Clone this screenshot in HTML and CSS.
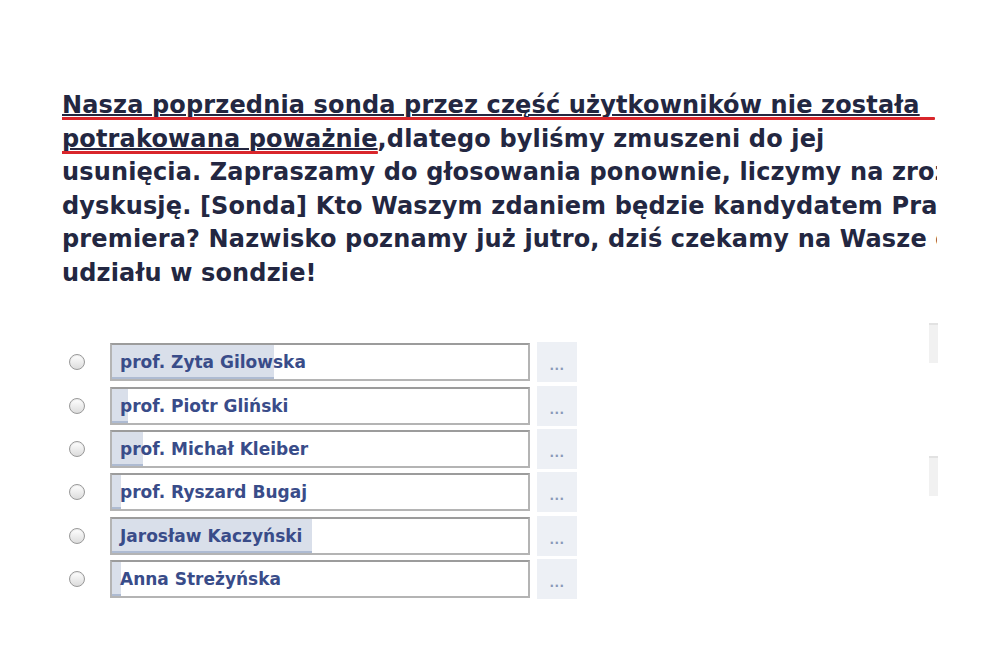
FILE: index.html
```html
<!DOCTYPE html>
<html lang="pl">
<head>
<meta charset="utf-8">
<title>Sonda</title>
<link rel="stylesheet" href="styles.css">
</head>
<body>
<div class="page">
  <div class="post">
    <div class="line"><span class="ul">Nasza poprzednia sonda przez część użytkowników nie została</span></div>
    <div class="line"><span class="ul">potrakowana poważnie</span>,dlatego byliśmy zmuszeni do jej</div>
    <div class="line">usunięcia. Zapraszamy do głosowania ponownie, liczymy na zrozumienie i merytoryczną</div>
    <div class="line">dyskusję. [Sonda] Kto Waszym zdaniem będzie kandydatem Prawa i Sprawiedliwości na</div>
    <div class="line">premiera? Nazwisko poznamy już jutro, dziś czekamy na Wasze opinie. Zapraszamy do</div>
    <div class="line">udziału w sondzie!</div>
    <div class="mark mark1"></div>
    <div class="mark mark2"></div>
  </div>

  <div class="poll-area">
    <div class="poll">
      <div class="row">
        <span class="radio"></span>
        <div class="box"><div class="bar" style="width:162px"></div><span class="name">prof. Zyta Gilowska</span></div>
        <div class="more"><span class="dots">...</span></div>
      </div>
      <div class="row">
        <span class="radio"></span>
        <div class="box"><div class="bar" style="width:16px"></div><span class="name">prof. Piotr Gliński</span></div>
        <div class="more"><span class="dots">...</span></div>
      </div>
      <div class="row">
        <span class="radio"></span>
        <div class="box"><div class="bar" style="width:31px"></div><span class="name">prof. Michał Kleiber</span></div>
        <div class="more"><span class="dots">...</span></div>
      </div>
      <div class="row">
        <span class="radio"></span>
        <div class="box"><div class="bar" style="width:9px"></div><span class="name">prof. Ryszard Bugaj</span></div>
        <div class="more"><span class="dots">...</span></div>
      </div>
      <div class="row">
        <span class="radio"></span>
        <div class="box"><div class="bar" style="width:200px"></div><span class="name">Jarosław Kaczyński</span></div>
        <div class="more"><span class="dots">...</span></div>
      </div>
      <div class="row">
        <span class="radio"></span>
        <div class="box"><div class="bar" style="width:9px"></div><span class="name">Anna Streżyńska</span></div>
        <div class="more"><span class="dots">...</span></div>
      </div>
    </div>
    <div class="side">
      <div class="ghost ghost1"></div>
      <div class="ghost ghost2"></div>
    </div>
  </div>
</div>
</body>
</html>
```

FILE: styles.css
```css
html, body {
  margin: 0;
  padding: 0;
  background: #ffffff;
}

.page {
  width: 1000px;
  height: 667px;
  overflow: hidden;
  padding: 89px 0 0 62px;
  box-sizing: border-box;
}

.post {
  position: relative;
  width: 875px;
  overflow: hidden;
  font-family: "DejaVu Sans", "Liberation Sans", sans-serif;
  font-weight: bold;
  font-size: 24px;
  letter-spacing: 0.15px;
  line-height: 33.5px;
  color: #232741;
}

.line {
  white-space: nowrap;
}

.ul {
  text-decoration: underline;
  text-decoration-thickness: 2px;
  text-underline-offset: 1px;
}

.mark {
  position: absolute;
  height: 3px;
  background: #d9262b;
  border-radius: 1px;
}

.mark1 {
  left: -5px;
  top: 28px;
  width: 878px;
}

.mark2 {
  left: -10px;
  top: 62px;
  width: 326px;
}

.poll-area {
  display: flex;
  margin-top: 53px;
}

.poll {
  display: flex;
  flex-direction: column;
  gap: 5px;
}

.row {
  display: flex;
  align-items: center;
  height: 38.4px;
}

.radio {
  width: 16px;
  height: 16px;
  box-sizing: border-box;
  border: 1px solid #999999;
  border-radius: 50%;
  background: linear-gradient(#ffffff, #dcdcdc);
  box-shadow: inset 0 1px 1px rgba(0, 0, 0, 0.08);
  margin-left: 7px;
  margin-right: 25px;
}

.box {
  position: relative;
  width: 420px;
  height: 38px;
  box-sizing: border-box;
  border: 2px solid #b4b4b4;
  border-top-color: #9c9c9c;
  background: #ffffff;
  display: flex;
  align-items: center;
}

.bar {
  position: absolute;
  left: 0;
  top: 0;
  bottom: 0;
  background: #d9dfea;
  border-bottom: 2px solid #aebbd2;
}

.name {
  position: relative;
  padding-left: 8px;
  font-family: "DejaVu Sans", "Liberation Sans", sans-serif;
  font-weight: bold;
  font-size: 17px;
  color: #394c89;
  white-space: nowrap;
}

.more {
  width: 40px;
  height: 40px;
  margin-left: 7px;
  background: #edf0f5;
  display: flex;
  align-items: center;
  justify-content: center;
}

.dots {
  font-family: "DejaVu Sans", sans-serif;
  font-weight: bold;
  font-size: 12px;
  color: #8a99b8;
  letter-spacing: 0.5px;
  padding-top: 8px;
}

.side {
  margin-left: 352px;
  display: flex;
  flex-direction: column;
}

.ghost {
  width: 9px;
  background: #f1f1f1;
  border-top: 2px solid #e2e2e2;
}

.ghost1 {
  height: 38px;
  margin-top: -20px;
}

.ghost2 {
  height: 38px;
  margin-top: 93px;
}
```
